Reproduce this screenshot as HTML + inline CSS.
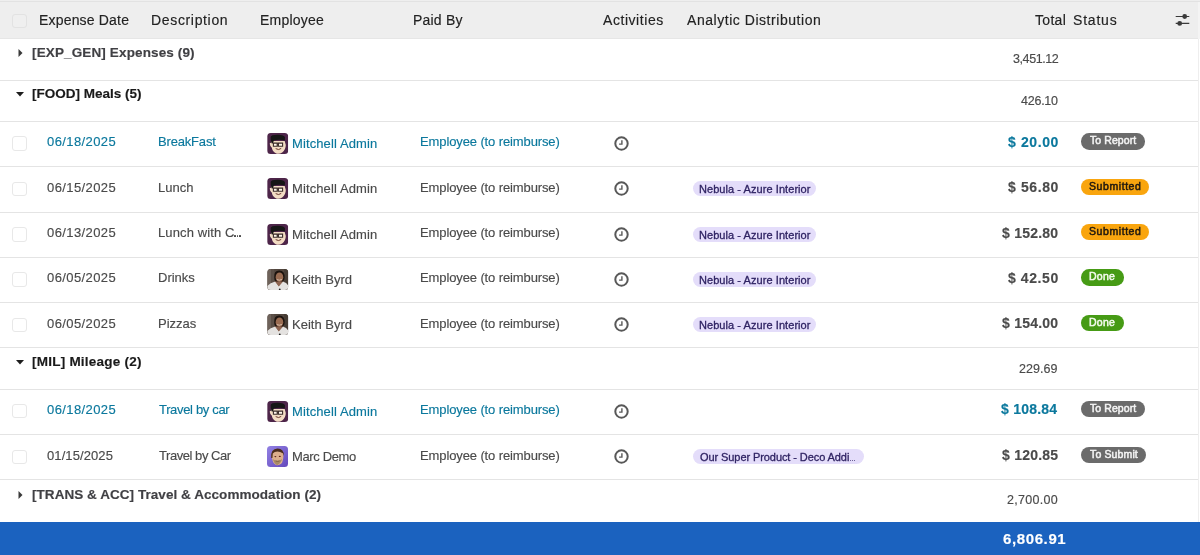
<!DOCTYPE html><html><head><meta charset="utf-8"><style>
html,body{margin:0;padding:0;width:1200px;height:555px;overflow:hidden;background:#fff;font-family:"Liberation Sans", sans-serif}
.t{position:absolute;white-space:nowrap;line-height:30px;height:30px;-webkit-text-stroke:0.15px currentColor;will-change:transform}
.ln{position:absolute;left:0;width:1198px;height:1px;background:#e4e4e4}
.cb{position:absolute;width:12.5px;height:12.5px;border:1px solid #e8e8e8;border-radius:3px;background:#fff}
.badge{position:absolute;height:16.4px;border-radius:8.2px}
.tag{position:absolute;height:15px;border-radius:7.5px;background:#e4ddfa}
.ic{position:absolute}
</style></head><body>
<div style="position:absolute;left:0;top:0;width:1200px;height:39px;background:#eeeeee"></div>
<div style="position:absolute;left:0;top:1px;width:1200px;height:1px;background:#e2e2e2"></div>
<div style="position:absolute;left:0;top:38px;width:1198px;height:1px;background:#e6e6e6"></div>
<div class="cb" style="left:12.3px;top:13.7px;background:#efefef;border-color:#e2e2e2"></div>
<div style="position:absolute;left:1198px;top:39px;width:1px;height:483px;background:#eeeeee"></div>
<div style="position:absolute;left:1198px;top:2px;width:2px;height:37px;background:#f4f4f4"></div>
<div class="ln" style="top:80px"></div>
<div class="ln" style="top:121px"></div>
<div class="ln" style="top:166px"></div>
<div class="ln" style="top:211.5px"></div>
<div class="ln" style="top:257px"></div>
<div class="ln" style="top:302px"></div>
<div class="ln" style="top:347px"></div>
<div class="ln" style="top:388.5px"></div>
<div class="ln" style="top:434px"></div>
<div class="ln" style="top:479px"></div>
<div style="position:absolute;left:0;top:521.5px;width:1200px;height:34px;background:#1b62bf"></div>
<svg class="ic" style="left:18px;top:49px" width="5" height="8" viewBox="0 0 5 8"><path d="M0.5 0 L4.5 4 L0.5 8Z" fill="#3a3a3a"/></svg>
<svg class="ic" style="left:16px;top:91.5px" width="8" height="5" viewBox="0 0 8 5"><path d="M0 0 H8 L4 4.5Z" fill="#1e1e1e"/></svg>
<svg class="ic" style="left:16px;top:359.5px" width="8" height="5" viewBox="0 0 8 5"><path d="M0 0 H8 L4 4.5Z" fill="#1e1e1e"/></svg>
<svg class="ic" style="left:18px;top:491px" width="5" height="8" viewBox="0 0 5 8"><path d="M0.5 0 L4.5 4 L0.5 8Z" fill="#3a3a3a"/></svg>
<svg class="ic" style="left:1175px;top:13px" width="16" height="14" viewBox="0 0 16 14"><path d="M0.7 3.5 H14.3 M0.7 10.4 H14.3" stroke="#3a3a3a" stroke-width="1.1"/><circle cx="9.7" cy="3.5" r="2.4" fill="#3a3a3a"/><circle cx="4.7" cy="10.4" r="2.4" fill="#3a3a3a"/></svg>
<div class="badge" style="left:1080.7px;top:133.2px;width:64.0px;background:#6b6b6b"></div>
<div class="cb" style="left:12.3px;top:136.2px"></div>
<div class="ic" style="left:267.2px;top:133.0px;width:21px;height:21px"><svg width="21.4" height="21" viewBox="0 0 21 21"><defs><clipPath id="mc"><rect width="21" height="21" rx="3.5"/></clipPath></defs><g clip-path="url(#mc)"><rect width="21" height="21" fill="#4d2549"/><path d="M2.6 11 Q2.4 9.5 3.6 10 L4.2 8 L17.5 8 L18.6 12 Q18.5 17 15 19.5 Q12 21.5 9 20.5 Q5.5 19 4.5 14.5 Q2.8 13.5 2.6 11Z" fill="#f3dcc4"/><path d="M3.5 4 Q4 1.6 10.5 1.7 Q17 1.6 17.8 4.5 L17.6 7.6 Q12 5.8 6.6 7.6 L5.8 10.5 L4.3 10.2 Q3.3 7 3.5 4Z" fill="#161616"/><path d="M6.2 10.1 H10 V13.2 H6.2Z M11.2 10.1 H15.4 V13.2 H11.2Z" fill="#fff6ea" stroke="#3a2b28" stroke-width="1.1"/><path d="M10 11 H11.2" stroke="#3a2b28" stroke-width="0.9"/><path d="M8.5 15.6 Q11.5 17.6 14 15.4" stroke="#6a3a30" stroke-width="1" fill="none"/></g></svg></div>
<div class="ic" style="left:614px;top:137.5px;width:15px;height:15px;margin-top:-1.5px"><svg width="15" height="15" viewBox="0 0 15 15"><circle cx="7.5" cy="7.5" r="6.2" fill="none" stroke="#585858" stroke-width="2"/><path d="M7.9 4.3 V8.1 H5.1" fill="none" stroke="#585858" stroke-width="1.4"/></svg></div>
<div class="badge" style="left:1080.7px;top:178.5px;width:68.6px;background:#f9a50e"></div>
<div class="tag" style="left:693.3px;top:181.4px;width:123.2px"></div>
<div class="cb" style="left:12.3px;top:181.5px"></div>
<div class="ic" style="left:267.2px;top:178.3px;width:21px;height:21px"><svg width="21.4" height="21" viewBox="0 0 21 21"><defs><clipPath id="mc"><rect width="21" height="21" rx="3.5"/></clipPath></defs><g clip-path="url(#mc)"><rect width="21" height="21" fill="#4d2549"/><path d="M2.6 11 Q2.4 9.5 3.6 10 L4.2 8 L17.5 8 L18.6 12 Q18.5 17 15 19.5 Q12 21.5 9 20.5 Q5.5 19 4.5 14.5 Q2.8 13.5 2.6 11Z" fill="#f3dcc4"/><path d="M3.5 4 Q4 1.6 10.5 1.7 Q17 1.6 17.8 4.5 L17.6 7.6 Q12 5.8 6.6 7.6 L5.8 10.5 L4.3 10.2 Q3.3 7 3.5 4Z" fill="#161616"/><path d="M6.2 10.1 H10 V13.2 H6.2Z M11.2 10.1 H15.4 V13.2 H11.2Z" fill="#fff6ea" stroke="#3a2b28" stroke-width="1.1"/><path d="M10 11 H11.2" stroke="#3a2b28" stroke-width="0.9"/><path d="M8.5 15.6 Q11.5 17.6 14 15.4" stroke="#6a3a30" stroke-width="1" fill="none"/></g></svg></div>
<div class="ic" style="left:614px;top:182.8px;width:15px;height:15px;margin-top:-1.5px"><svg width="15" height="15" viewBox="0 0 15 15"><circle cx="7.5" cy="7.5" r="6.2" fill="none" stroke="#585858" stroke-width="2"/><path d="M7.9 4.3 V8.1 H5.1" fill="none" stroke="#585858" stroke-width="1.4"/></svg></div>
<div style="position:absolute;left:234.4px;top:235.3px;width:1.7px;height:1.7px;background:#4a4a4a;border-radius:0.5px"></div>
<div style="position:absolute;left:236.8px;top:235.3px;width:1.7px;height:1.7px;background:#4a4a4a;border-radius:0.5px"></div>
<div style="position:absolute;left:239.2px;top:235.3px;width:1.7px;height:1.7px;background:#4a4a4a;border-radius:0.5px"></div>
<div class="badge" style="left:1080.7px;top:224.0px;width:68.6px;background:#f9a50e"></div>
<div class="tag" style="left:693.3px;top:226.9px;width:123.2px"></div>
<div class="cb" style="left:12.3px;top:227.0px"></div>
<div class="ic" style="left:267.2px;top:223.8px;width:21px;height:21px"><svg width="21.4" height="21" viewBox="0 0 21 21"><defs><clipPath id="mc"><rect width="21" height="21" rx="3.5"/></clipPath></defs><g clip-path="url(#mc)"><rect width="21" height="21" fill="#4d2549"/><path d="M2.6 11 Q2.4 9.5 3.6 10 L4.2 8 L17.5 8 L18.6 12 Q18.5 17 15 19.5 Q12 21.5 9 20.5 Q5.5 19 4.5 14.5 Q2.8 13.5 2.6 11Z" fill="#f3dcc4"/><path d="M3.5 4 Q4 1.6 10.5 1.7 Q17 1.6 17.8 4.5 L17.6 7.6 Q12 5.8 6.6 7.6 L5.8 10.5 L4.3 10.2 Q3.3 7 3.5 4Z" fill="#161616"/><path d="M6.2 10.1 H10 V13.2 H6.2Z M11.2 10.1 H15.4 V13.2 H11.2Z" fill="#fff6ea" stroke="#3a2b28" stroke-width="1.1"/><path d="M10 11 H11.2" stroke="#3a2b28" stroke-width="0.9"/><path d="M8.5 15.6 Q11.5 17.6 14 15.4" stroke="#6a3a30" stroke-width="1" fill="none"/></g></svg></div>
<div class="ic" style="left:614px;top:228.3px;width:15px;height:15px;margin-top:-1.5px"><svg width="15" height="15" viewBox="0 0 15 15"><circle cx="7.5" cy="7.5" r="6.2" fill="none" stroke="#585858" stroke-width="2"/><path d="M7.9 4.3 V8.1 H5.1" fill="none" stroke="#585858" stroke-width="1.4"/></svg></div>
<div class="badge" style="left:1080.7px;top:269.2px;width:43.2px;background:#469b15"></div>
<div class="tag" style="left:693.3px;top:272.1px;width:123.2px"></div>
<div class="cb" style="left:12.3px;top:272.2px"></div>
<div class="ic" style="left:267.2px;top:269.0px;width:21px;height:21px"><svg width="21.5" height="21" viewBox="0 0 21 21"><defs><clipPath id="kc"><rect width="21" height="21" rx="3.5"/></clipPath></defs><g clip-path="url(#kc)"><rect width="21" height="21" fill="#52463e"/><rect x="0" y="0" width="4" height="21" fill="#6e625a"/><rect x="4" y="0" width="3" height="21" fill="#5c5048"/><rect x="17" y="0" width="4" height="21" fill="#463c34"/><path d="M0 21 L0 17 Q3 13.5 8 12.5 L11.5 17 L15.5 12.5 Q19.5 13.5 21 16.5 L21 21Z" fill="#e4e2e0"/><path d="M7.5 12 L11.5 17.5 L16 12.2 Q14.5 10.5 11.8 11 Q9.5 10.5 7.5 12Z" fill="#8e6450"/><path d="M7 8.5 Q6.5 1.5 12 1.6 Q17.6 1.5 17.4 8.8 Q17.2 12 15.5 12.5 L8.5 12.5 Q7 11.5 7 8.5Z" fill="#1c130e"/><ellipse cx="12.2" cy="8.2" rx="3.8" ry="4.8" fill="#9a6c52"/><path d="M9.5 10.5 Q12 12 14.6 10.4" stroke="#f0e0d0" stroke-width="0.7" fill="none"/><circle cx="12.5" cy="20.5" r="0.9" fill="#222"/></g></svg></div>
<div class="ic" style="left:614px;top:273.5px;width:15px;height:15px;margin-top:-1.5px"><svg width="15" height="15" viewBox="0 0 15 15"><circle cx="7.5" cy="7.5" r="6.2" fill="none" stroke="#585858" stroke-width="2"/><path d="M7.9 4.3 V8.1 H5.1" fill="none" stroke="#585858" stroke-width="1.4"/></svg></div>
<div class="badge" style="left:1080.7px;top:314.5px;width:43.2px;background:#469b15"></div>
<div class="tag" style="left:693.3px;top:317.4px;width:123.2px"></div>
<div class="cb" style="left:12.3px;top:317.5px"></div>
<div class="ic" style="left:267.2px;top:314.3px;width:21px;height:21px"><svg width="21.5" height="21" viewBox="0 0 21 21"><defs><clipPath id="kc"><rect width="21" height="21" rx="3.5"/></clipPath></defs><g clip-path="url(#kc)"><rect width="21" height="21" fill="#52463e"/><rect x="0" y="0" width="4" height="21" fill="#6e625a"/><rect x="4" y="0" width="3" height="21" fill="#5c5048"/><rect x="17" y="0" width="4" height="21" fill="#463c34"/><path d="M0 21 L0 17 Q3 13.5 8 12.5 L11.5 17 L15.5 12.5 Q19.5 13.5 21 16.5 L21 21Z" fill="#e4e2e0"/><path d="M7.5 12 L11.5 17.5 L16 12.2 Q14.5 10.5 11.8 11 Q9.5 10.5 7.5 12Z" fill="#8e6450"/><path d="M7 8.5 Q6.5 1.5 12 1.6 Q17.6 1.5 17.4 8.8 Q17.2 12 15.5 12.5 L8.5 12.5 Q7 11.5 7 8.5Z" fill="#1c130e"/><ellipse cx="12.2" cy="8.2" rx="3.8" ry="4.8" fill="#9a6c52"/><path d="M9.5 10.5 Q12 12 14.6 10.4" stroke="#f0e0d0" stroke-width="0.7" fill="none"/><circle cx="12.5" cy="20.5" r="0.9" fill="#222"/></g></svg></div>
<div class="ic" style="left:614px;top:318.8px;width:15px;height:15px;margin-top:-1.5px"><svg width="15" height="15" viewBox="0 0 15 15"><circle cx="7.5" cy="7.5" r="6.2" fill="none" stroke="#585858" stroke-width="2"/><path d="M7.9 4.3 V8.1 H5.1" fill="none" stroke="#585858" stroke-width="1.4"/></svg></div>
<div class="badge" style="left:1080.7px;top:400.7px;width:64.0px;background:#6b6b6b"></div>
<div class="cb" style="left:12.3px;top:403.7px"></div>
<div class="ic" style="left:267.2px;top:400.5px;width:21px;height:21px"><svg width="21.4" height="21" viewBox="0 0 21 21"><defs><clipPath id="mc"><rect width="21" height="21" rx="3.5"/></clipPath></defs><g clip-path="url(#mc)"><rect width="21" height="21" fill="#4d2549"/><path d="M2.6 11 Q2.4 9.5 3.6 10 L4.2 8 L17.5 8 L18.6 12 Q18.5 17 15 19.5 Q12 21.5 9 20.5 Q5.5 19 4.5 14.5 Q2.8 13.5 2.6 11Z" fill="#f3dcc4"/><path d="M3.5 4 Q4 1.6 10.5 1.7 Q17 1.6 17.8 4.5 L17.6 7.6 Q12 5.8 6.6 7.6 L5.8 10.5 L4.3 10.2 Q3.3 7 3.5 4Z" fill="#161616"/><path d="M6.2 10.1 H10 V13.2 H6.2Z M11.2 10.1 H15.4 V13.2 H11.2Z" fill="#fff6ea" stroke="#3a2b28" stroke-width="1.1"/><path d="M10 11 H11.2" stroke="#3a2b28" stroke-width="0.9"/><path d="M8.5 15.6 Q11.5 17.6 14 15.4" stroke="#6a3a30" stroke-width="1" fill="none"/></g></svg></div>
<div class="ic" style="left:614px;top:405.0px;width:15px;height:15px;margin-top:-1.5px"><svg width="15" height="15" viewBox="0 0 15 15"><circle cx="7.5" cy="7.5" r="6.2" fill="none" stroke="#585858" stroke-width="2"/><path d="M7.9 4.3 V8.1 H5.1" fill="none" stroke="#585858" stroke-width="1.4"/></svg></div>
<div class="badge" style="left:1080.7px;top:446.5px;width:65.8px;background:#6b6b6b"></div>
<div class="tag" style="left:693.3px;top:449.4px;width:170.6px"></div>
<div style="position:absolute;left:849.6px;top:459.5px;width:1.3px;height:1.5px;background:#2f2363;border-radius:0.4px"></div>
<div style="position:absolute;left:851.8px;top:459.5px;width:1.3px;height:1.5px;background:#2f2363;border-radius:0.4px"></div>
<div style="position:absolute;left:854.0px;top:459.5px;width:1.3px;height:1.5px;background:#2f2363;border-radius:0.4px"></div>
<div class="cb" style="left:12.3px;top:449.5px"></div>
<div class="ic" style="left:267.2px;top:446.3px;width:21px;height:21px"><svg width="21" height="21" viewBox="0 0 21 21"><defs><clipPath id="dc"><rect width="21" height="21" rx="3.5"/></clipPath><linearGradient id="dg" x1="0" x2="1" y1="0" y2="1"><stop offset="0" stop-color="#9282e4"/><stop offset="1" stop-color="#6448bc"/></linearGradient></defs><g clip-path="url(#dc)"><rect width="21" height="21" fill="url(#dg)"/><path d="M4.6 9 Q4.4 3.2 10.5 3 Q16.4 3 16.4 9 Q16.4 15.5 14.2 17.8 Q12 19.6 9.8 19.2 Q6.6 18.2 5.6 14.5 Q4.6 12 4.6 9Z" fill="#dcae8c"/><path d="M4.2 12 Q3.4 2.8 10.5 2.6 Q17.2 2.8 16.8 10 L15.8 7.2 Q13 5.6 10.5 5.6 Q7.4 5.8 5.8 7.4 L5.4 12Z" fill="#4a2c1c"/><path d="M5.8 13.2 Q7 17.5 10 19.2 Q13.5 18 15.2 13 Q13.5 14.6 10.6 14.4 Q8 14.6 5.8 13.2Z" fill="#a88a66"/><path d="M8.6 15 Q10.5 16 12.6 15" stroke="#7a5a40" stroke-width="0.8" fill="none"/><ellipse cx="8.4" cy="10.6" rx="1" ry="0.7" fill="#5a2418"/><ellipse cx="12.8" cy="10.4" rx="1" ry="0.7" fill="#5a2418"/></g></svg></div>
<div class="ic" style="left:614px;top:450.8px;width:15px;height:15px;margin-top:-1.5px"><svg width="15" height="15" viewBox="0 0 15 15"><circle cx="7.5" cy="7.5" r="6.2" fill="none" stroke="#585858" stroke-width="2"/><path d="M7.9 4.3 V8.1 H5.1" fill="none" stroke="#585858" stroke-width="1.4"/></svg></div>
<div class="t" style="left:39.20px;top:5.00px;font-size:14px;font-weight:400;letter-spacing:0.182px;color:#222222">Expense Date</div>
<div class="t" style="left:150.70px;top:5.00px;font-size:14px;font-weight:400;letter-spacing:0.66px;color:#222222">Description</div>
<div class="t" style="left:259.80px;top:5.00px;font-size:14px;font-weight:400;letter-spacing:0.214px;color:#222222">Employee</div>
<div class="t" style="left:412.75px;top:5.00px;font-size:14px;font-weight:400;letter-spacing:0.208px;color:#222222">Paid By</div>
<div class="t" style="left:603.00px;top:5.00px;font-size:14px;font-weight:400;letter-spacing:0.556px;color:#222222">Activities</div>
<div class="t" style="left:686.60px;top:5.00px;font-size:14px;font-weight:400;letter-spacing:0.54px;color:#222222">Analytic Distribution</div>
<div class="t" style="left:1034.50px;top:5.00px;font-size:14px;font-weight:400;letter-spacing:0.3px;color:#222222">Total</div>
<div class="t" style="left:1073.00px;top:5.00px;font-size:14px;font-weight:400;letter-spacing:0.8px;color:#222222">Status</div>
<div class="t" style="left:31.50px;top:38.00px;font-size:13.5px;font-weight:700;letter-spacing:0.133px;color:#404044">[EXP_GEN] Expenses (9)</div>
<div class="t" style="left:1012.70px;top:44.00px;font-size:12.5px;font-weight:400;letter-spacing:-0.414px;color:#4a4a4a">3,451.12</div>
<div class="t" style="left:31.50px;top:79.00px;font-size:13.5px;font-weight:700;letter-spacing:0.007px;color:#1a1a1a">[FOOD] Meals (5)</div>
<div class="t" style="left:1021.00px;top:86.00px;font-size:12.5px;font-weight:400;letter-spacing:-0.24px;color:#4a4a4a">426.10</div>
<div class="t" style="left:31.50px;top:347.00px;font-size:13.5px;font-weight:700;letter-spacing:0.234px;color:#1a1a1a">[MIL] Mileage (2)</div>
<div class="t" style="left:1019.00px;top:354.00px;font-size:12.5px;font-weight:400;letter-spacing:0.06px;color:#4a4a4a">229.69</div>
<div class="t" style="left:31.70px;top:479.50px;font-size:13.5px;font-weight:700;letter-spacing:0.051px;color:#404044">[TRANS & ACC] Travel & Accommodation (2)</div>
<div class="t" style="left:1007.30px;top:485.00px;font-size:12.5px;font-weight:400;letter-spacing:0.286px;color:#4a4a4a">2,700.00</div>
<div class="t" style="left:46.70px;top:127.00px;font-size:13px;font-weight:400;letter-spacing:0.4px;color:#0b789d">06/18/2025</div>
<div class="t" style="left:158.20px;top:127.00px;font-size:13px;font-weight:400;letter-spacing:-0.175px;color:#0b789d">BreakFast</div>
<div class="t" style="left:291.70px;top:129.00px;font-size:13px;font-weight:400;letter-spacing:0.108px;color:#0b789d">Mitchell Admin</div>
<div class="t" style="left:419.50px;top:127.00px;font-size:13px;font-weight:400;letter-spacing:-0.114px;color:#0b789d">Employee (to reimburse)</div>
<div class="t" style="left:1008.00px;top:127.00px;font-size:14px;font-weight:700;letter-spacing:0.6px;color:#0b789d">$ 20.00</div>
<div class="t" style="left:1089.90px;top:125.00px;font-size:10.5px;font-weight:400;letter-spacing:0.075px;color:#f4f4f4;-webkit-text-stroke:0.5px currentColor">To Report</div>
<div class="t" style="left:46.70px;top:173.00px;font-size:13px;font-weight:400;letter-spacing:0.4px;color:#4a4a4a">06/15/2025</div>
<div class="t" style="left:158.20px;top:173.00px;font-size:13px;font-weight:400;letter-spacing:0px;color:#4a4a4a">Lunch</div>
<div class="t" style="left:291.70px;top:174.00px;font-size:13px;font-weight:400;letter-spacing:0.108px;color:#4a4a4a">Mitchell Admin</div>
<div class="t" style="left:419.50px;top:173.00px;font-size:13px;font-weight:400;letter-spacing:-0.114px;color:#4a4a4a">Employee (to reimburse)</div>
<div class="t" style="left:1008.00px;top:172.00px;font-size:14px;font-weight:700;letter-spacing:0.6px;color:#4a4a4a">$ 56.80</div>
<div class="t" style="left:1088.90px;top:171.00px;font-size:10.5px;font-weight:400;letter-spacing:0.575px;color:#1f1810;-webkit-text-stroke:0.5px currentColor">Submitted</div>
<div class="t" style="left:699.00px;top:174.00px;font-size:11px;font-weight:400;letter-spacing:0.064px;color:#2f2363;-webkit-text-stroke:0.3px currentColor">Nebula - Azure Interior</div>
<div class="t" style="left:46.70px;top:218.00px;font-size:13px;font-weight:400;letter-spacing:0.4px;color:#4a4a4a">06/13/2025</div>
<div class="t" style="left:158.20px;top:218.00px;font-size:13px;font-weight:400;letter-spacing:0.118px;color:#4a4a4a">Lunch with C</div>
<div class="t" style="left:291.70px;top:220.00px;font-size:13px;font-weight:400;letter-spacing:0.108px;color:#4a4a4a">Mitchell Admin</div>
<div class="t" style="left:419.50px;top:218.00px;font-size:13px;font-weight:400;letter-spacing:-0.114px;color:#4a4a4a">Employee (to reimburse)</div>
<div class="t" style="left:1002.00px;top:218.00px;font-size:14px;font-weight:700;letter-spacing:0.229px;color:#4a4a4a">$ 152.80</div>
<div class="t" style="left:1088.90px;top:216.00px;font-size:10.5px;font-weight:400;letter-spacing:0.575px;color:#1f1810;-webkit-text-stroke:0.5px currentColor">Submitted</div>
<div class="t" style="left:699.00px;top:220.00px;font-size:11px;font-weight:400;letter-spacing:0.064px;color:#2f2363;-webkit-text-stroke:0.3px currentColor">Nebula - Azure Interior</div>
<div class="t" style="left:46.70px;top:263.00px;font-size:13px;font-weight:400;letter-spacing:0.4px;color:#4a4a4a">06/05/2025</div>
<div class="t" style="left:158.20px;top:263.00px;font-size:13px;font-weight:400;letter-spacing:0.0px;color:#4a4a4a">Drinks</div>
<div class="t" style="left:291.70px;top:265.00px;font-size:13px;font-weight:400;letter-spacing:0.0px;color:#4a4a4a">Keith Byrd</div>
<div class="t" style="left:419.50px;top:263.00px;font-size:13px;font-weight:400;letter-spacing:-0.114px;color:#4a4a4a">Employee (to reimburse)</div>
<div class="t" style="left:1008.10px;top:263.00px;font-size:14px;font-weight:700;letter-spacing:0.583px;color:#4a4a4a">$ 42.50</div>
<div class="t" style="left:1088.90px;top:261.00px;font-size:10.5px;font-weight:400;letter-spacing:0.233px;color:#f4fbee;-webkit-text-stroke:0.5px currentColor">Done</div>
<div class="t" style="left:699.00px;top:265.00px;font-size:11px;font-weight:400;letter-spacing:0.064px;color:#2f2363;-webkit-text-stroke:0.3px currentColor">Nebula - Azure Interior</div>
<div class="t" style="left:46.70px;top:309.00px;font-size:13px;font-weight:400;letter-spacing:0.4px;color:#4a4a4a">06/05/2025</div>
<div class="t" style="left:158.20px;top:309.00px;font-size:13px;font-weight:400;letter-spacing:0px;color:#4a4a4a">Pizzas</div>
<div class="t" style="left:291.70px;top:310.00px;font-size:13px;font-weight:400;letter-spacing:0.0px;color:#4a4a4a">Keith Byrd</div>
<div class="t" style="left:419.50px;top:309.00px;font-size:13px;font-weight:400;letter-spacing:-0.114px;color:#4a4a4a">Employee (to reimburse)</div>
<div class="t" style="left:1002.00px;top:308.00px;font-size:14px;font-weight:700;letter-spacing:0.229px;color:#4a4a4a">$ 154.00</div>
<div class="t" style="left:1088.90px;top:307.00px;font-size:10.5px;font-weight:400;letter-spacing:0.233px;color:#f4fbee;-webkit-text-stroke:0.5px currentColor">Done</div>
<div class="t" style="left:699.00px;top:310.00px;font-size:11px;font-weight:400;letter-spacing:0.064px;color:#2f2363;-webkit-text-stroke:0.3px currentColor">Nebula - Azure Interior</div>
<div class="t" style="left:46.70px;top:395.00px;font-size:13px;font-weight:400;letter-spacing:0.4px;color:#0b789d">06/18/2025</div>
<div class="t" style="left:159.20px;top:395.00px;font-size:13px;font-weight:400;letter-spacing:-0.333px;color:#0b789d">Travel by car</div>
<div class="t" style="left:291.70px;top:397.00px;font-size:13px;font-weight:400;letter-spacing:0.108px;color:#0b789d">Mitchell Admin</div>
<div class="t" style="left:419.50px;top:395.00px;font-size:13px;font-weight:400;letter-spacing:-0.114px;color:#0b789d">Employee (to reimburse)</div>
<div class="t" style="left:1001.00px;top:394.00px;font-size:14px;font-weight:700;letter-spacing:0.229px;color:#0b789d">$ 108.84</div>
<div class="t" style="left:1089.90px;top:393.00px;font-size:10.5px;font-weight:400;letter-spacing:0.075px;color:#f4f4f4;-webkit-text-stroke:0.5px currentColor">To Report</div>
<div class="t" style="left:46.70px;top:441.00px;font-size:13px;font-weight:400;letter-spacing:0.089px;color:#4a4a4a">01/15/2025</div>
<div class="t" style="left:159.20px;top:441.00px;font-size:13px;font-weight:400;letter-spacing:-0.45px;color:#4a4a4a">Travel by Car</div>
<div class="t" style="left:291.70px;top:442.00px;font-size:13px;font-weight:400;letter-spacing:-0.375px;color:#4a4a4a">Marc Demo</div>
<div class="t" style="left:419.50px;top:441.00px;font-size:13px;font-weight:400;letter-spacing:-0.114px;color:#4a4a4a">Employee (to reimburse)</div>
<div class="t" style="left:1002.00px;top:440.00px;font-size:14px;font-weight:700;letter-spacing:0.229px;color:#4a4a4a">$ 120.85</div>
<div class="t" style="left:1089.90px;top:439.00px;font-size:10.5px;font-weight:400;letter-spacing:0.137px;color:#f4f4f4;-webkit-text-stroke:0.5px currentColor">To Submit</div>
<div class="t" style="left:700.00px;top:442.00px;font-size:11px;font-weight:400;letter-spacing:-0.082px;color:#2f2363;-webkit-text-stroke:0.3px currentColor">Our Super Product - Deco Addi</div>
<div class="t" style="left:1002.70px;top:524.00px;font-size:15px;font-weight:700;letter-spacing:0.614px;color:#ffffff">6,806.91</div>
</body></html>
